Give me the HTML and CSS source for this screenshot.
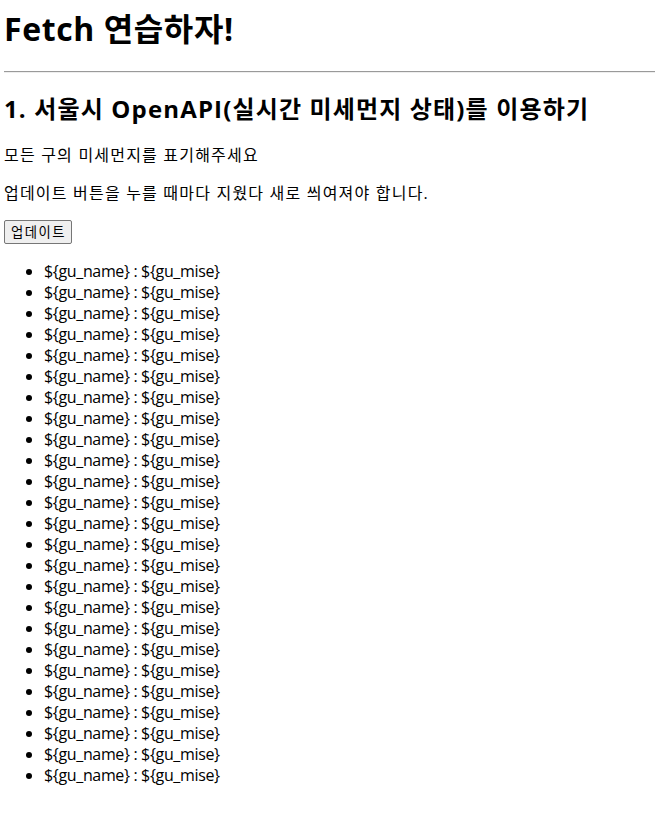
FILE: index.html
```html
<!DOCTYPE html>
<html lang="ko">
<head>
<meta charset="utf-8">
<title>Fetch 연습하자!</title>
<link rel="stylesheet" href="styles.css">
</head>
<body class="page">
<h1 class="title">Fetch 연습하자!</h1>
<hr class="rule">
<h2 class="subtitle">1. 서울시 OpenAPI(실시간 미세먼지 상태)를 이용하기</h2>
<p class="text">모든 구의 미세먼지를 표기해주세요</p>
<p class="text">업데이트 버튼을 누를 때마다 지웠다 새로 씌여져야 합니다.</p>
<button class="update-btn">업데이트</button>
<ul class="gu-list">
<li>${gu_name} : ${gu_mise}</li>
<li>${gu_name} : ${gu_mise}</li>
<li>${gu_name} : ${gu_mise}</li>
<li>${gu_name} : ${gu_mise}</li>
<li>${gu_name} : ${gu_mise}</li>
<li>${gu_name} : ${gu_mise}</li>
<li>${gu_name} : ${gu_mise}</li>
<li>${gu_name} : ${gu_mise}</li>
<li>${gu_name} : ${gu_mise}</li>
<li>${gu_name} : ${gu_mise}</li>
<li>${gu_name} : ${gu_mise}</li>
<li>${gu_name} : ${gu_mise}</li>
<li>${gu_name} : ${gu_mise}</li>
<li>${gu_name} : ${gu_mise}</li>
<li>${gu_name} : ${gu_mise}</li>
<li>${gu_name} : ${gu_mise}</li>
<li>${gu_name} : ${gu_mise}</li>
<li>${gu_name} : ${gu_mise}</li>
<li>${gu_name} : ${gu_mise}</li>
<li>${gu_name} : ${gu_mise}</li>
<li>${gu_name} : ${gu_mise}</li>
<li>${gu_name} : ${gu_mise}</li>
<li>${gu_name} : ${gu_mise}</li>
<li>${gu_name} : ${gu_mise}</li>
<li>${gu_name} : ${gu_mise}</li>
</ul>
</body>
</html>
```
FILE: styles.css
```css
.page {
  margin: 8px 4px;
  font-family: "Open Sans", "Noto Sans CJK KR", sans-serif;
  font-size: 16px;
  color: #000;
  background: #fff;
}
.title {
  font-size: 32px;
  font-weight: bold;
  line-height: 42px;
  margin: 0 0 21.44px;
  letter-spacing: 0.6px;
}
.rule {
  margin: 8px 0;
  border: 0;
  border-top: 1px solid #9a9a9a;
  border-bottom: 1px solid #eeeeee;
  height: 0;
}
.subtitle {
  font-size: 24px;
  font-weight: bold;
  line-height: 32px;
  margin: 19.92px 0;
  letter-spacing: 1.15px;
}
.text {
  line-height: 21px;
  margin: 16px 0;
  letter-spacing: 1.2px;
}
.text + .text {
  margin-top: 17px;
}
.update-btn {
  font-family: "Open Sans", "Noto Sans CJK KR", sans-serif;
  font-size: 13.33px;
  line-height: 18px;
  padding: 1px 5px 1px 6px;
  border: 1px solid #767676;
  border-radius: 2px;
  background: #efefef;
  color: #000;
  margin: 0;
  height: 24px;
  letter-spacing: 1.5px;
}
.gu-list {
  margin: 17px 0;
  padding-left: 40px;
  line-height: 21px;
  letter-spacing: -0.35px;
}
```
